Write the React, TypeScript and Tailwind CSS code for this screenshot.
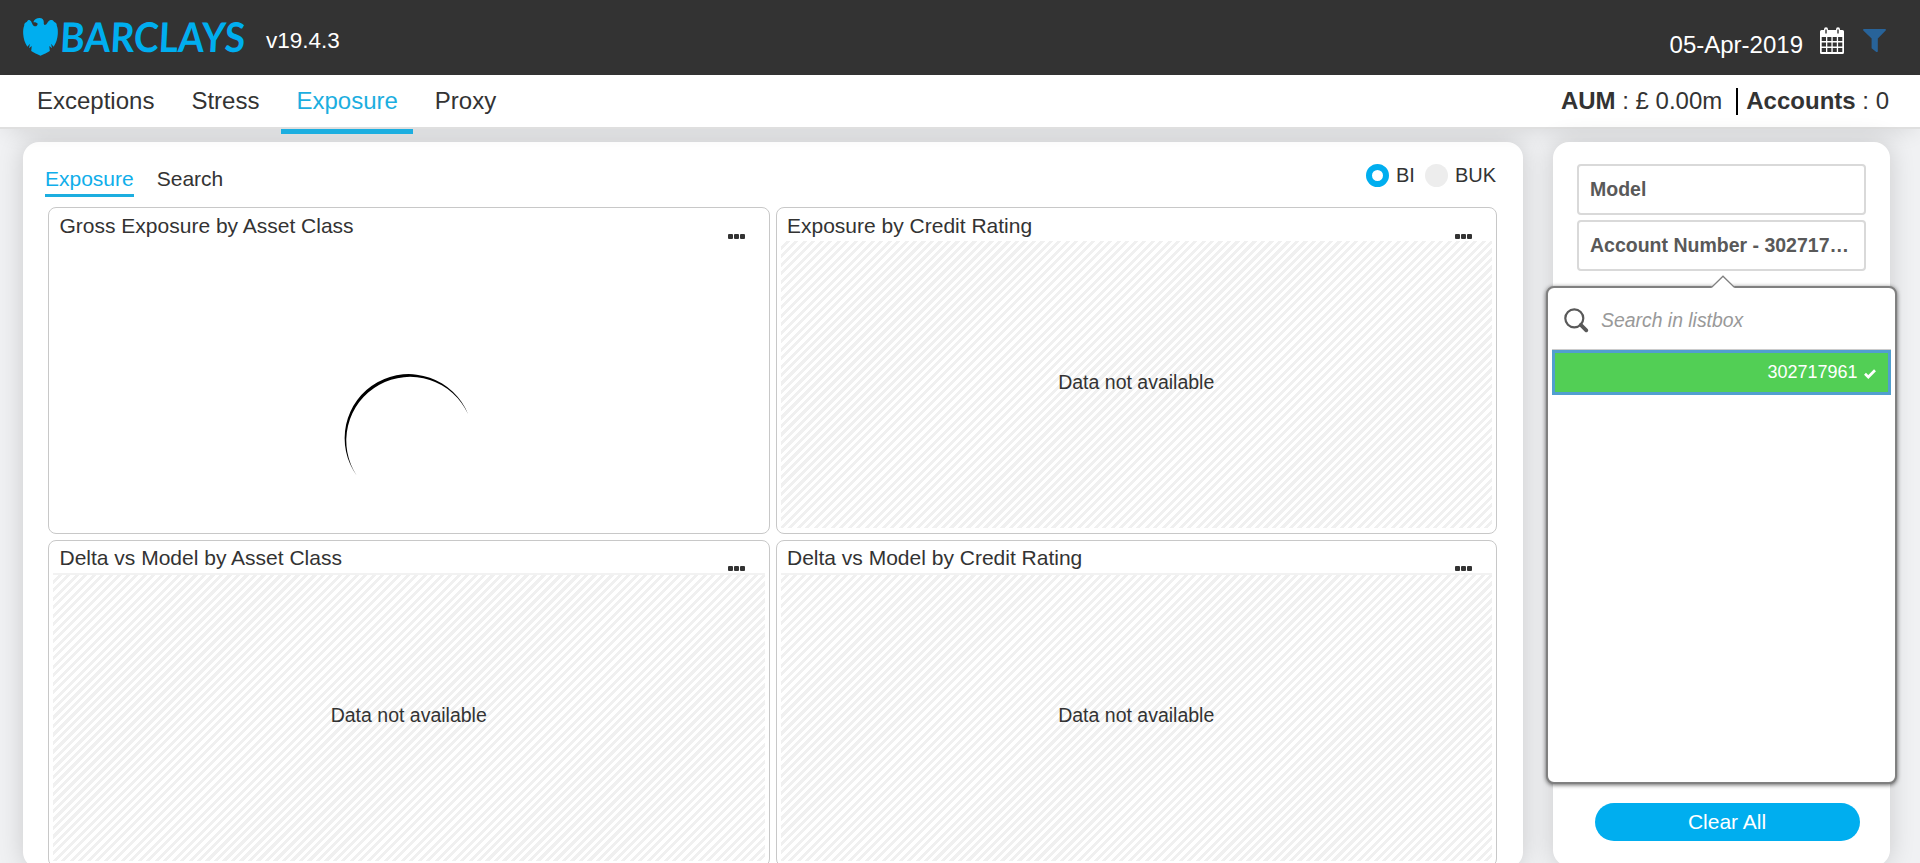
import React from "react";

const sans = "font-['Liberation_Sans',Arial,sans-serif]";

function Logo() {
  return (
    <svg className="block h-[56px] w-[228px] shrink-0 overflow-visible" viewBox="20 8 228 56" fill="#00aeef">
      <path d="M33.300 22.300C34.300 19.200 36.800 18 39.500 18C42.500 18 44 20 43.800 22.500C43.600 24.300 44.200 25.200 45.400 24.800C47.700 24 47.600 20.600 50.800 20C52.300 19.800 53.500 20.500 54 21.800C56 22.400 57 24 56.800 25.800C57.800 28 58 31 57.800 34C57.500 38.500 56.200 43 53.600 46.800L51.100 43.800L52 48.300L49.300 46L49.800 51C47 52.800 44 54 40.500 55.800C37 54 34 52.800 31.200 51L31.700 46L29 48.300L29.900 43.800L27.400 46.800C24.800 43 23.500 38.500 23.200 34C23 31 23.200 28 24.200 25.800C24 24 25 22.400 27 21.800C27.500 20.500 28.500 19.800 29.800 20.200C32 21 31.800 25 34.500 26.200C36.300 26.500 37.800 25.500 37.600 23.400C36.400 22.400 34.800 22.100 33.300 22.300Z" />
      <g transform="translate(59.500 51.500) skewX(-3)">
        <text
          x="0"
          y="0"
          textLength="185"
          lengthAdjust="spacingAndGlyphs"
          className="font-[Lato,sans-serif] text-[41px] font-bold"
        >
          BARCLAYS
        </text>
      </g>
    </svg>
  );
}

function CalendarIcon() {
  return (
    <svg className="block h-[28px] w-[24px]" viewBox="0 0 24 28">
      <path
        fillRule="evenodd"
        fill="#fff"
        d="M1.500 3H4V2.500Q4 .3 6 .3T8 2.500V3H16V2.500Q16 .3 18 .3T20 2.500V3H22.500Q24 3 24 4.500V25.500Q24 27 22.500 27H1.500Q0 27 0 25.500V4.500Q0 3 1.500 3ZM5.300 2.500V6.500H6.700V2.500ZM17.300 2.500V6.500H18.700V2.500ZM1.700 10V14H6V10ZM7.300 10V14H11.400V10ZM12.700 10V14H16.800V10ZM18.100 10V14H22.300V10ZM1.700 15.400V19.600H6V15.400ZM7.300 15.400V19.600H11.400V15.400ZM12.700 15.400V19.600H16.800V15.400ZM18.100 15.400V19.600H22.300V15.400ZM1.700 21V25H6V21ZM7.300 21V25H11.400V21ZM12.700 21V25H16.800V21ZM18.100 21V25H22.300V21Z"
      />
    </svg>
  );
}

function Header() {
  return (
    <header className="flex h-[75px] items-start justify-between bg-[#333] pl-5 text-white">
      <div className="flex pt-2">
        <Logo />
        <span className="ml-[18px] pt-[17px] text-[22.500px] leading-8">v19.4.3</span>
      </div>
      <div className="flex items-start pr-[34px]">
        <span className="mt-[29px] text-[24px] leading-8">05-Apr-2019</span>
        <span className="ml-[17px] mt-[27px]">
          <CalendarIcon />
        </span>
        <svg className="ml-[19px] mt-[29px] h-[24px] w-[23px]" viewBox="0 0 23 24">
          <path fill="#286399" d="M.6 0H22.400Q23.300 .6 22.700 1.500L14.800 9.500V22.200Q14.500 23.400 13.300 22.900L8.600 19.200V9.500L.3 1.500Q-.3 .6 .6 0Z" />
        </svg>
      </div>
    </header>
  );
}

function Nav() {
  return (
    <nav className="relative flex h-[54px] justify-between border-b-2 border-[#dfdfdf] bg-white text-[24px] text-[#333] shadow-[0_8px_22px_-6px_rgba(0,0,0,0.110)]">
      <div className="flex pl-[22px] leading-[52px]">
        <span className="h-[59px] px-[15px]">Exceptions</span>
        <span className="ml-[7px] h-[59px] px-[15px]">Stress</span>
        <span className="ml-[7px] h-[59px] border-b-[5px] border-[#1caee0] px-[15px] text-[#1caee0]">Exposure</span>
        <span className="ml-[7px] h-[59px] px-[15px]">Proxy</span>
      </div>
      <div className="flex items-center pr-[31px]">
        <span><b>AUM</b> : £ 0.00m</span>
        <span className="ml-[14px] mr-[8px] h-[27px] w-[2px] bg-black" />
        <span><b>Accounts</b> : 0</span>
      </div>
    </nav>
  );
}

function Spinner() {
  return (
    <svg className="ml-[288px] mt-[160px] h-[120px] w-[132px]" viewBox="341 368 132 120">
      <path d="M468 414A64.050 64.050 0 1 0 357 476A63.770 63.770 0 1 1 468 414Z" fill="#000" />
    </svg>
  );
}

function Card({ title, loading, second }: { title: string; loading?: boolean; second?: boolean }) {
  return (
    <section className="flex h-[327px] flex-col overflow-hidden rounded-[8px] border border-[#c8c8c8] bg-white px-[4px] pb-[5px]">
      <div className={second ? "flex h-[32px] shrink-0 justify-between" : "flex h-[33px] shrink-0 justify-between"}>
        <h2 className={second ? "ml-[6.500px] mt-[5px] text-[21px] leading-6 text-[#333]" : "ml-[6.500px] mt-[6px] text-[21px] leading-6 text-[#333]"}>
          {title}
        </h2>
        <span className={second ? "mr-[20px] mt-[25px] flex gap-px" : "mr-[20px] mt-[26px] flex gap-px"}>
          <i className="h-[5px] w-[5px] rounded-[1px] bg-[#333]" />
          <i className="h-[5px] w-[5px] rounded-[1px] bg-[#333]" />
          <i className="h-[5px] w-[5px] rounded-[1px] bg-[#333]" />
        </span>
      </div>
      {loading ? (
        <div className="-mt-[33px]">
          <Spinner />
        </div>
      ) : (
        <div
          className={
            second
              ? "flex grow items-center justify-center border-t-2 border-[#f2f2f2] bg-[repeating-linear-gradient(-45deg,#fff,#fff_3px,#f0f0f0_3px,#f0f0f0_6px)] pb-[5px] text-[19.500px] text-[#333]"
              : "flex grow items-center justify-center bg-[repeating-linear-gradient(-45deg,#fff,#fff_3px,#f0f0f0_3px,#f0f0f0_6px)] pb-[4px] text-[19.500px] text-[#333]"
          }
        >
          Data not available
        </div>
      )}
    </section>
  );
}

function ExposurePanel() {
  return (
    <main className="h-[726px] w-[1500px] shrink-0 rounded-[16px] bg-white shadow-[0_0_26px_rgba(0,0,0,0.160)]">
      <div className="flex h-[65px] items-start justify-between pl-[22px] pr-[27px] text-[#333]">
        <div className="flex gap-[23px] pt-[22px] text-[21px]">
          <span className="h-[33px] border-b-[3px] border-[#1caee0] leading-[30px] text-[#10aeea]">Exposure</span>
          <span className="leading-[30px]">Search</span>
        </div>
        <div className="flex items-center pt-[21px] text-[20px] leading-6">
          <span className="h-[23px] w-[23px] rounded-full border-[6px] border-[#00aeef] bg-white" />
          <span className="ml-[7px]">BI</span>
          <span className="ml-[10px] h-[23px] w-[23px] rounded-full bg-[#ededed]" />
          <span className="ml-[7px]">BUK</span>
        </div>
      </div>
      <div className="ml-[25px] grid w-[1449px] grid-cols-2 gap-[6px]">
        <Card title="Gross Exposure by Asset Class" loading />
        <Card title="Exposure by Credit Rating" />
        <Card title="Delta vs Model by Asset Class" second />
        <Card title="Delta vs Model by Credit Rating" second />
      </div>
    </main>
  );
}

function ListboxPopup() {
  return (
    <div className="absolute left-[-7px] top-[144px] h-[498px] w-[351px] rounded-[8px] border-2 border-[#808080] bg-white px-[4px] shadow-[0_1px_4px_rgba(0,0,0,0.600)]">
      <svg className="absolute left-[162px] top-[-13px] h-[14px] w-[26px]" viewBox="0 0 26 14">
        <path d="M1 14V12.500L13 1L25 12.500V14Z" fill="#fff" />
        <path d="M1 12.500L2 12L13 1.200L24 12L25 12.500" fill="none" stroke="#808080" strokeWidth="1.300" />
      </svg>
      <div className="flex h-[62px] items-center border-b border-[#ccc] pl-[11.500px]">
        <svg className="mt-[4px] h-[25px] w-[25px]" viewBox="0 0 25 25" fill="none" stroke="#595959">
          <circle cx="10.300" cy="10.300" r="9" strokeWidth="2.200" />
          <path d="M16.800 16.800L22.300 22.300" strokeWidth="3.800" strokeLinecap="round" />
        </svg>
        <span className="ml-[12.500px] mt-[4px] text-[19.400px] italic text-[#999]">Search in listbox</span>
      </div>
      <div className="flex h-[45px] items-center justify-end border-[3px] border-[#519fcf] bg-[#52cf55] pr-[12px] text-[18px] text-white">
        <span>302717961</span>
        <svg className="ml-[6.500px] mt-[3px] h-[10px] w-[12px]" viewBox="0 0 12 10">
          <path d="M1 4.800L4.300 8L11 1.200" fill="none" stroke="#fff" strokeWidth="2.700" />
        </svg>
      </div>
    </div>
  );
}

function FilterPanel() {
  return (
    <aside className="relative flex h-[724px] w-[337px] shrink-0 flex-col rounded-[16px] bg-white px-[24px] pt-[22px] text-[#595959] shadow-[0_0_26px_rgba(0,0,0,0.160)]">
      <div className="mb-[5px] h-[51px] w-[289px] rounded-[4px] border-2 border-[#d9d9d9] px-[11px] text-[19.500px] font-bold leading-[46px]">Model</div>
      <div className="h-[51px] w-[289px] overflow-hidden text-ellipsis whitespace-nowrap rounded-[4px] border-2 border-[#d9d9d9] px-[11px] text-[19.500px] font-bold leading-[46px]">
        Account Number - 302717…
      </div>
      <button className="mb-[25px] ml-[18px] mt-auto h-[38px] w-[265px] rounded-full bg-[#00aeef] pr-[1px] text-[21px] text-white">Clear All</button>
      <ListboxPopup />
    </aside>
  );
}

export default function App() {
  return (
    <div className={`h-[863px] w-full overflow-hidden bg-[#f0f1f3] ${sans}`}>
      <Header />
      <Nav />
      <div className="flex gap-[30px] pl-[23px] pt-[13px]">
        <ExposurePanel />
        <FilterPanel />
      </div>
    </div>
  );
}
